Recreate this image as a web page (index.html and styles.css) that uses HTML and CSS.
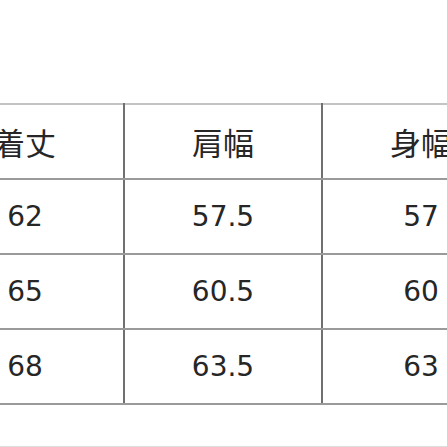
FILE: index.html
```html
<!DOCTYPE html>
<html lang="ja">
<head>
<meta charset="utf-8">
<link rel="stylesheet" href="styles.css">
</head>
<body>
<div class="page">
  <table class="size-table">
    <tr class="head"><td>着丈</td><td>肩幅</td><td>身幅</td></tr>
    <tr><td>62</td><td>57.5</td><td>57</td></tr>
    <tr><td>65</td><td>60.5</td><td>60</td></tr>
    <tr><td>68</td><td>63.5</td><td>63</td></tr>
  </table>
  <div class="bottom-bar"></div>
</div>
</body>
</html>
```
FILE: styles.css
```css
html, body {
  margin: 0;
  padding: 0;
  background: #fff;
  overflow: hidden;
}
.page {
  width: 447px;
  height: 447px;
  overflow: hidden;
  padding-top: 103px;
  box-sizing: border-box;
}
.size-table {
  border-collapse: collapse;
  margin-left: -75px;
  width: 596px;
  table-layout: fixed;
  font-family: "DejaVu Sans", "Noto Sans CJK JP", sans-serif;
  font-size: 28px;
  color: #262626;
}
.size-table td {
  height: 73px;
  padding: 0;
  text-align: center;
  vertical-align: middle;
  border-top: 2px solid #9a9a9a;
  border-bottom: 2px solid #9a9a9a;
  border-left: 2px solid #707070;
  border-right: 2px solid #707070;
}
.size-table tr.head td {
  border-top-color: #c4c4c4;
  font-family: "Noto Sans CJK JP", sans-serif;
  font-size: 31px;
}
.bottom-bar {
  margin-top: 41px;
  height: 2px;
  border-top: 1px solid #ddd;
  background: #333;
}
```
